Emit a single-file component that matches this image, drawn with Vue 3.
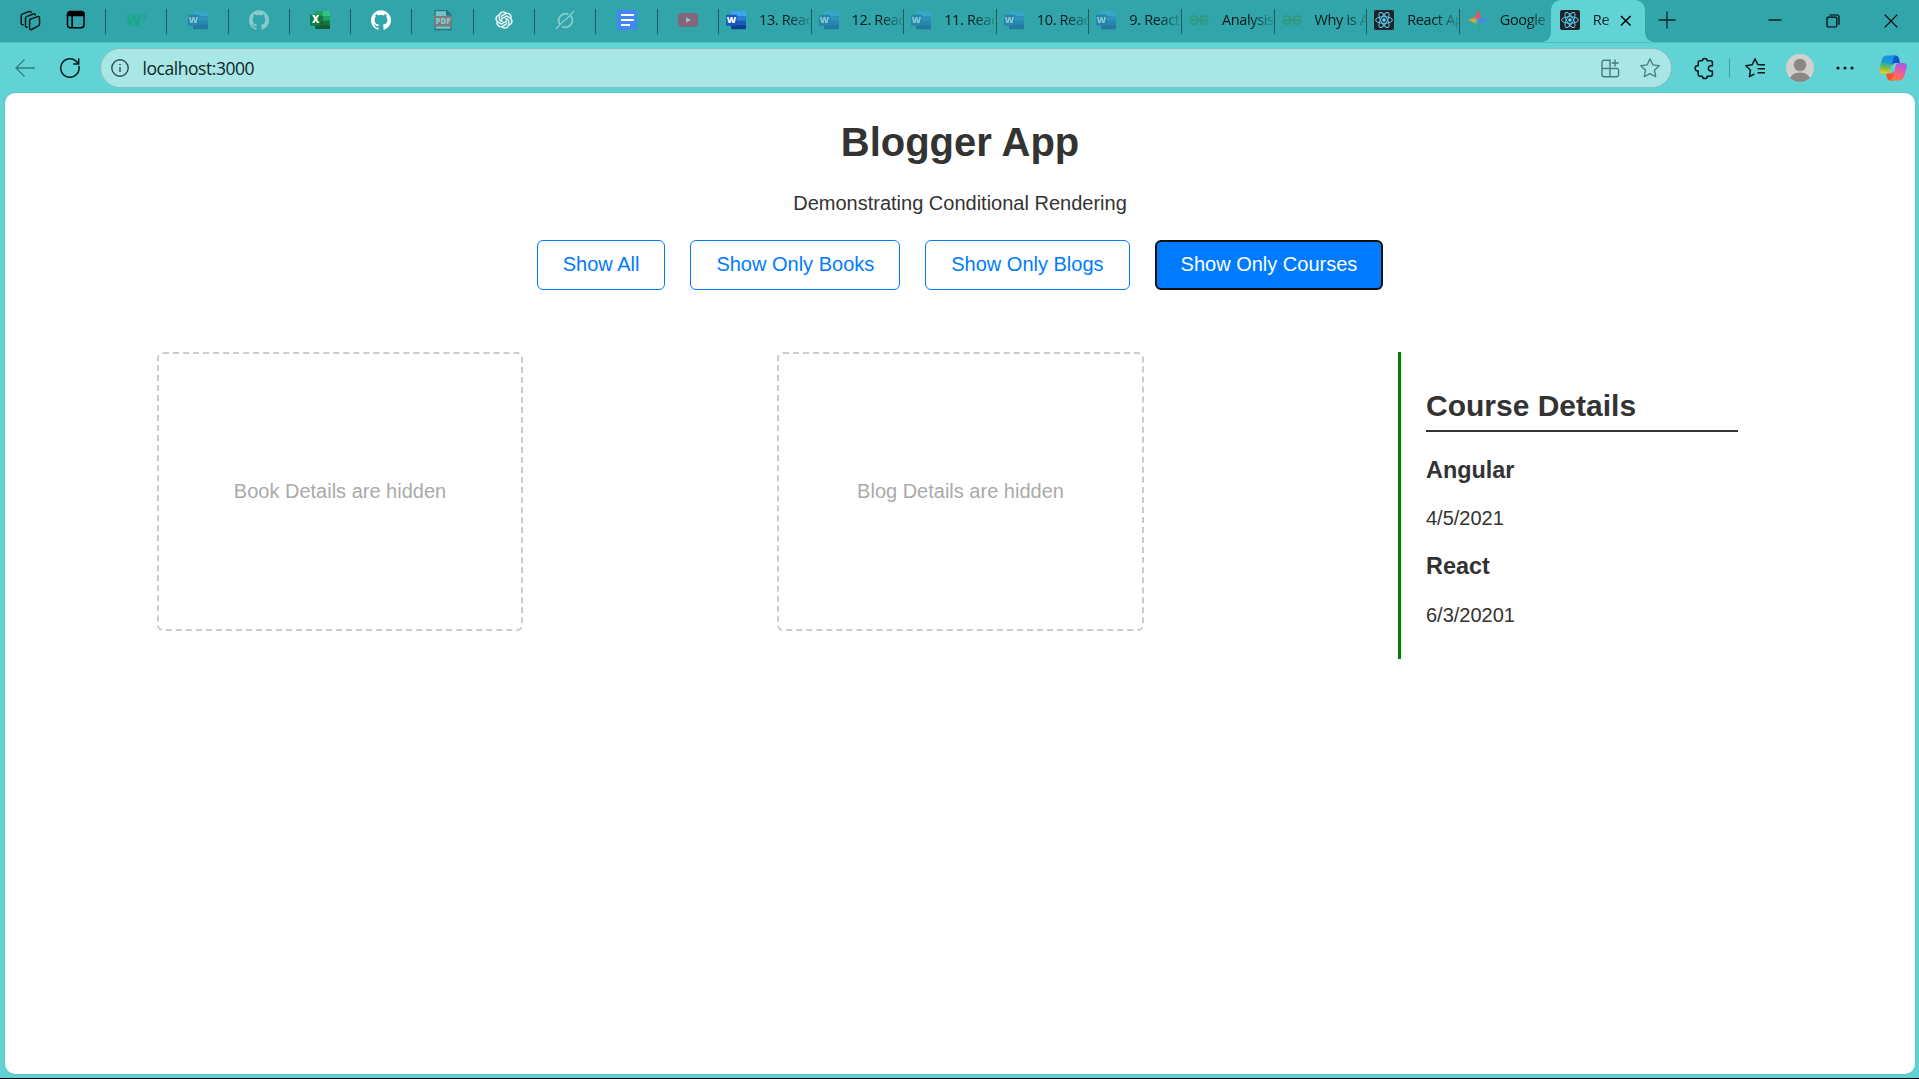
<script setup>
import { ref } from 'vue'

const pinned = [
  { icon: 'w3', dim: true },
  { icon: 'word', dim: true },
  { icon: 'github', dim: true },
  { icon: 'excel', dim: false },
  { icon: 'github', dim: false },
  { icon: 'pdf', dim: true },
  { icon: 'openai', dim: false },
  { icon: 'grok', dim: true },
  { icon: 'docs', dim: false },
  { icon: 'youtube', dim: true },
]

const tabs = [
  { icon: 'word', label: '13. React' },
  { icon: 'word', label: '12. React', dim: true },
  { icon: 'word', label: '11. React', dim: true },
  { icon: 'word', label: '10. React', dim: true },
  { icon: 'word', label: '9. React', dim: true },
  { icon: 'gfg', label: 'Analysis', dim: true },
  { icon: 'gfg', label: 'Why is A', dim: true },
  { icon: 'react', label: 'React Ap' },
  { icon: 'gemini', label: 'Google' },
]

const allTabs = [
  ...pinned.map((t) => ({ ...t, pinned: true })),
  ...tabs,
  { icon: 'react', label: 'Re', active: true },
]

const views = [
  { id: 'all', label: 'Show All' },
  { id: 'books', label: 'Show Only Books' },
  { id: 'blogs', label: 'Show Only Blogs' },
  { id: 'courses', label: 'Show Only Courses' },
]
const current = ref('courses')

const courses = [
  { name: 'Angular', date: '4/5/2021' },
  { name: 'React', date: '6/3/20201' },
]
</script>

<template>
  <div class="window">
    <header class="tabstrip">
      <div class="workspace">
        <svg class="ws-icon" viewBox="0 0 22 22" fill="none" stroke="#0a1a1b" stroke-width="1.5" stroke-linejoin="round" stroke-linecap="round">
          <path d="M11.2 9.2 18.6 6.6c1-.4 1.9.2 1.9 1.2v6.3c0 .8-.4 1.4-1.100 1.7l-6.800 3.700c-1 .4-2-.1-2-1.200v-7.500c0-.8.2-1.300.6-1.600z" />
          <path d="M8.200 17.200c-1 .2-1.700-.5-1.700-1.500V8.300c0-.8.300-1.400 1-1.700l6.900-2.600c1-.3 1.700 0 1.900.9" />
          <path d="M4.200 14.800c-1 .2-2-.5-2-1.500V5.800c0-.8.300-1.400 1-1.700l6.900-2.600c1-.3 1.700 0 1.900.9" />
        </svg>
        <svg class="tab-actions" viewBox="0 0 20 20" fill="none" stroke="#000" stroke-width="1.500">
          <rect x="1.500" y="1.800" width="16.500" height="16" rx="3" />
          <path d="M1.500 5.500V4.500a3 3 0 0 1 3-3H15a3 3 0 0 1 3 3v1z" fill="#000" />
          <path d="M6.100 5v12.500" />
        </svg>
      </div>

      <div
        v-for="(tab, i) in allTabs"
        :key="i"
        class="tab"
        :class="{ pinned: tab.pinned, active: tab.active }"
      >
        <span class="favicon" :class="[tab.icon, { dim: tab.dim }]">
          <svg v-if="tab.icon === 'w3'" viewBox="0 0 20 20">
            <text x="0" y="15.800" class="glyph" font-size="21" textLength="15.500" lengthAdjust="spacingAndGlyphs" fill="#04aa6d">w</text>
            <text x="15" y="8.800" class="glyph" font-size="9" fill="#04aa6d">3</text>
          </svg>

          <svg v-else-if="tab.icon === 'word'" viewBox="0 0 20 20">
            <path d="M6 1h13a1 1 0 0 1 1 1v4H5V2a1 1 0 0 1 1-1z" fill="#41a5ee" />
            <path d="M5 6h15v4.500H5z" fill="#2b7cd3" />
            <path d="M5 10.500h15V15H5z" fill="#185abd" />
            <path d="M5 15h15v3.500a.7.700 0 0 1-.7.700H6a1 1 0 0 1-1-1z" fill="#103f91" />
            <rect x="0" y="4.700" width="11" height="11" rx="1" fill="#185abd" />
            <text x="5.500" y="13.400" class="glyph" font-size="9" text-anchor="middle" fill="#fff">W</text>
          </svg>

          <svg v-else-if="tab.icon === 'excel'" viewBox="0 0 20 20">
            <path d="M6 1h7v5H5V2a1 1 0 0 1 1-1z" fill="#21a366" />
            <path d="M13 1h6a1 1 0 0 1 1 1v4h-7z" fill="#33c481" />
            <path d="M5 6h8v4.500H5z" fill="#107c41" />
            <path d="M13 6h7v4.500h-7z" fill="#21a366" />
            <path d="M5 10.500h8V19H6a1 1 0 0 1-1-1z" fill="#185c37" />
            <path d="M13 10.500h7V15h-7z" fill="#107c41" />
            <path d="M13 15h7v3.500a.6.600 0 0 1-.6.600H13z" fill="#185c37" />
            <rect x="0" y="4.700" width="11" height="11" rx="1" fill="#107c41" />
            <text x="5.500" y="13.400" class="glyph" font-size="10" text-anchor="middle" fill="#fff">X</text>
          </svg>

          <svg v-else-if="tab.icon === 'github'" viewBox="0 0 24 24" fill="#fff">
            <path d="M12 .297c-6.630 0-12 5.373-12 12 0 5.303 3.438 9.800 8.205 11.385.6.113.82-.258.82-.577 0-.285-.01-1.040-.015-2.040-3.338.724-4.042-1.610-4.042-1.610C4.422 18.070 3.633 17.700 3.633 17.700c-1.087-.744.084-.729.084-.729 1.205.084 1.838 1.236 1.838 1.236 1.070 1.835 2.809 1.305 3.495.998.108-.776.417-1.305.76-1.605-2.665-.3-5.466-1.332-5.466-5.930 0-1.310.465-2.380 1.235-3.220-.135-.303-.54-1.523.105-3.176 0 0 1.005-.322 3.300 1.230.96-.267 1.980-.399 3-.405 1.020.006 2.040.138 3 .405 2.280-1.552 3.285-1.230 3.285-1.230.645 1.653.24 2.873.12 3.176.765.840 1.230 1.910 1.230 3.220 0 4.610-2.805 5.625-5.475 5.920.42.360.81 1.096.81 2.220 0 1.606-.015 2.896-.015 3.286 0 .315.210.690.825.570C20.565 22.092 24 17.592 24 12.297c0-6.627-5.373-12-12-12" />
          </svg>

          <svg v-else-if="tab.icon === 'pdf'" viewBox="0 0 20 20">
            <path d="M2 .7h12l4 4v14.800H2z" fill="#d5eeee" stroke="#123c3e" stroke-width="1.300" />
            <path d="M13.500.7v4.500H18" fill="#123c3e" stroke="#123c3e" />
            <rect x="1" y="6" width="18" height="10.500" fill="#e0443e" />
            <text x="10" y="14.200" class="glyph" font-size="8" text-anchor="middle" textLength="15" lengthAdjust="spacingAndGlyphs" fill="#fff">PDF</text>
          </svg>

          <svg v-else-if="tab.icon === 'openai'" viewBox="-2 -2 28 28" fill="#fff" stroke="#fff" stroke-width=".4">
            <path d="M22.282 9.821a5.985 5.985 0 0 0-.516-4.910 6.046 6.046 0 0 0-6.510-2.900A6.065 6.065 0 0 0 4.981 4.182a5.985 5.985 0 0 0-3.998 2.900 6.046 6.046 0 0 0 .743 7.097 5.980 5.980 0 0 0 .511 4.911 6.051 6.051 0 0 0 6.515 2.900A5.985 5.985 0 0 0 13.260 24a6.056 6.056 0 0 0 5.772-4.206 5.990 5.990 0 0 0 3.998-2.900 6.056 6.056 0 0 0-.748-7.073zM13.260 22.430a4.476 4.476 0 0 1-2.876-1.041l.141-.080 4.779-2.758a.795.795 0 0 0 .393-.681v-6.737l2.020 1.169a.071.071 0 0 1 .038.052v5.583a4.504 4.504 0 0 1-4.495 4.493zM3.600 18.304a4.470 4.470 0 0 1-.535-3.014l.142.085 4.783 2.759a.771.771 0 0 0 .781 0l5.843-3.369v2.332a.080.080 0 0 1-.033.062L9.740 19.950a4.500 4.500 0 0 1-6.140-1.646zM2.341 7.896a4.485 4.485 0 0 1 2.366-1.973V11.600a.766.766 0 0 0 .388.677l5.815 3.354-2.020 1.169a.076.076 0 0 1-.071 0l-4.830-2.787A4.504 4.504 0 0 1 2.341 7.872zm16.597 3.855l-5.833-3.387L15.119 7.200a.076.076 0 0 1 .071 0l4.830 2.791a4.494 4.494 0 0 1-.676 8.105v-5.678a.790.790 0 0 0-.406-.667zm2.010-3.023l-.141-.085-4.774-2.782a.776.776 0 0 0-.785 0L9.409 9.230V6.897a.066.066 0 0 1 .028-.061l4.830-2.787a4.500 4.500 0 0 1 6.680 4.660zm-12.640 4.135l-2.020-1.164a.080.080 0 0 1-.038-.057V6.075a4.500 4.500 0 0 1 7.375-3.453l-.142.080L8.704 5.460a.795.795 0 0 0-.393.681zm1.097-2.365l2.602-1.500 2.607 1.500v2.999l-2.597 1.500-2.607-1.500z" />
          </svg>

          <svg v-else-if="tab.icon === 'grok'" viewBox="0 0 20 20" fill="none" stroke="#fff" stroke-width="1.900">
            <path d="M15.200 5.200a7 7 0 0 1-8.200 11.200M4.800 14.400A7 7 0 0 1 13.500 4.300" />
            <path d="M.8 19.200 6.500 13 13 7.500 19 1" stroke-width="1.300" />
          </svg>

          <svg v-else-if="tab.icon === 'docs'" viewBox="0 0 20 20">
            <rect width="20" height="20" rx="2.500" fill="#4285f4" />
            <path d="M4 5h13M4 10h13M4 15h9" stroke="#fff" stroke-width="2.100" />
          </svg>

          <svg v-else-if="tab.icon === 'youtube'" viewBox="0 0 20 20">
            <rect y="3" width="20" height="14" rx="3.500" fill="#f8103c" />
            <path d="M8 7.200v5.600l5-2.800z" fill="#fff" />
          </svg>

          <svg v-else-if="tab.icon === 'gfg'" viewBox="0 0 20 20">
            <path d="M1.800 7.600C3 5.500 8.800 5 8.800 10.200c0 5-7.500 5.200-7.600 0h17.600c-.1 5.200-7.600 5-7.600 0 0-5.200 5.800-4.700 7-2.600" fill="none" stroke="#2f8d46" stroke-width="1.900" />
          </svg>

          <svg v-else-if="tab.icon === 'react'" viewBox="0 0 20 20">
            <rect width="20" height="20" rx="2" fill="#20232a" />
            <g fill="none" stroke="#61dafb" stroke-width=".9">
              <ellipse cx="10" cy="10" rx="8.400" ry="3.300" />
              <ellipse cx="10" cy="10" rx="8.400" ry="3.300" transform="rotate(60 10 10)" />
              <ellipse cx="10" cy="10" rx="8.400" ry="3.300" transform="rotate(120 10 10)" />
            </g>
            <circle cx="10" cy="10" r="1.800" fill="#61dafb" />
          </svg>

          <svg v-else-if="tab.icon === 'gemini'" viewBox="0 0 20 20">
            <defs>
              <linearGradient id="gem" gradientUnits="userSpaceOnUse" x1="1" y1="10" x2="19" y2="10">
                <stop offset="0" stop-color="#fbbc05" />
                <stop offset=".28" stop-color="#e8c02c" />
                <stop offset=".5" stop-color="#4a8df0" />
                <stop offset="1" stop-color="#3186ff" />
              </linearGradient>
              <linearGradient id="gemTop" gradientUnits="userSpaceOnUse" x1="10" y1="1" x2="11" y2="10">
                <stop offset="0" stop-color="#f94543" />
                <stop offset=".5" stop-color="#f2524c" />
                <stop offset="1" stop-color="#f94543" stop-opacity="0" />
              </linearGradient>
              <linearGradient id="gemBottom" gradientUnits="userSpaceOnUse" x1="8" y1="20" x2="9.500" y2="11">
                <stop offset="0" stop-color="#08b962" />
                <stop offset=".4" stop-color="#20b46e" />
                <stop offset="1" stop-color="#08b962" stop-opacity="0" />
              </linearGradient>
            </defs>
            <g stroke-linejoin="round">
              <path
                v-for="g in ['gem', 'gemTop', 'gemBottom']"
                :key="g"
                d="M10 .8c1 5 4 8.200 9.200 9.200-5.200 1-8.200 4.200-9.200 9.200C9 14.200 6 11 .8 10 6 9 9 5.800 10 .8z"
                :fill="`url(#${g})`"
                :stroke="`url(#${g})`"
                stroke-width=".8"
              />
            </g>
          </svg>
        </span>
        <span v-if="!tab.pinned" class="label">{{ tab.label }}</span>
        <svg v-if="tab.active" class="close" viewBox="0 0 12 12" stroke="#000" stroke-width="1.500">
          <path d="M1 1l10 10M11 1L1 11" />
        </svg>
      </div>

      <svg class="new-tab" viewBox="0 0 18 18" stroke="#0b2526" stroke-width="1.300">
        <path d="M9 .5v17M.5 9h17" />
      </svg>

      <div class="caption">
        <svg viewBox="0 0 14 14" stroke="#000" stroke-width="1.200"><path d="M.5 6h13" /></svg>
        <svg viewBox="0 0 14 14" fill="none" stroke="#000" stroke-width="1.200">
          <rect x="1" y="3.200" width="9.800" height="9.800" rx="1.200" />
          <path d="M3.500 1H11a2 2 0 0 1 2 2v7.800" />
        </svg>
        <svg viewBox="0 0 14 14" stroke="#000" stroke-width="1.200"><path d="M.7.7l12.600 12.600M13.300.7L.7 13.300" /></svg>
      </div>
    </header>

    <div class="toolbar">
      <svg class="back" viewBox="0 0 20 20" fill="none" stroke="#2f7f82" stroke-width="1.300">
        <path d="M20 10H1M9.500 1.500L1 10l8.500 8.500" />
      </svg>
      <svg class="reload" viewBox="0 0 20 20" fill="none" stroke="#061a1b" stroke-width="1.500">
        <path d="M18.900 7.900A9.200 9.200 0 1 1 16 3.100l2.500 2.700M18.700.5v5.600h-5.600" />
      </svg>

      <div class="address">
        <svg class="info" viewBox="0 0 18 18" fill="none" stroke="#2d4f50" stroke-width="1.400">
          <circle cx="9" cy="9" r="8.200" />
          <path d="M9 8v5" />
          <circle cx="9" cy="5.600" r=".5" fill="#2d4f50" stroke-width=".7" />
        </svg>
        <span class="url">localhost:3000</span>
        <svg class="install" viewBox="0 0 19 19" fill="none" stroke="#4c7b7c" stroke-width="1.400">
          <path d="M9 9.500V1.200H3.200A2.200 2.200 0 0 0 1 3.400v12.200A2.200 2.200 0 0 0 3.200 17.800h12.200a2.200 2.200 0 0 0 2.200-2.200v-4a2 2 0 0 0-2-2.100H1M9 9.500v8.300M14 .5v7M10.600 4H17.800" />
        </svg>
        <svg class="star" viewBox="0 0 20 20" fill="none" stroke="#4c7b7c" stroke-width="1.300" stroke-linejoin="round">
          <path d="M10 .9l2.800 5.900 6.400.9-4.700 4.500 1.200 6.500-5.700-3.100-5.700 3.100 1.200-6.500L.8 7.700l6.400-.9z" />
        </svg>
      </div>

      <svg class="puzzle" viewBox="0 0 20 20" fill="none" stroke="#061a1b" stroke-width="1.500" stroke-linejoin="round">
        <path d="M8 2.700a2.300 2.300 0 0 1 4.600 0H16a1.500 1.500 0 0 1 1.500 1.500V7.300H16.200a2.500 2.500 0 0 0 0 5H17.500v3.500a1.500 1.500 0 0 1-1.500 1.500H12.600a2.300 2.300 0 0 1-4.600 0H5.500A1.500 1.500 0 0 1 4 15.800V12.300H3.500a2.500 2.500 0 0 1 0-5H4V4.200A1.500 1.500 0 0 1 5.500 2.700z" />
      </svg>
      <i class="rule"></i>
      <svg class="favs" viewBox="0 0 20 20" fill="none" stroke="#061a1b" stroke-width="1.500" stroke-linejoin="round">
        <path d="M18.800 7.100l-6-.7L10 .9 7.200 6.800l-6.300.9 4.600 4.500L4.400 18.700l5-2.700M12.500 10.700H20M12.500 14.700H20M15 6.800H20" />
      </svg>
      <svg class="avatar" viewBox="0 0 28 28">
        <defs><clipPath id="av"><circle cx="14" cy="14" r="14" /></clipPath></defs>
        <g clip-path="url(#av)">
          <rect width="28" height="28" fill="#d2d0ce" />
          <circle cx="14" cy="11" r="6.200" fill="#8a8886" />
          <ellipse cx="14" cy="26.500" rx="10.500" ry="8" fill="#8a8886" />
        </g>
      </svg>
      <svg class="more" viewBox="0 0 18 4" fill="#061a1b">
        <circle cx="2" cy="2" r="1.600" /><circle cx="9" cy="2" r="1.600" /><circle cx="16" cy="2" r="1.600" />
      </svg>
      <svg class="copilot" viewBox="0 0 28 26">
        <defs>
          <linearGradient id="cl" x1=".4" y1="0" x2=".3" y2="1">
            <stop offset="0" stop-color="#1592e6" />
            <stop offset=".35" stop-color="#1d9bd0" />
            <stop offset=".65" stop-color="#6dbb56" />
            <stop offset="1" stop-color="#f6cf0c" />
          </linearGradient>
          <linearGradient id="cr" x1=".7" y1="0" x2=".3" y2="1">
            <stop offset="0" stop-color="#a657ee" />
            <stop offset=".5" stop-color="#ee5a9b" />
            <stop offset="1" stop-color="#fd7a3e" />
          </linearGradient>
          <linearGradient id="cb" x1="0" y1="0" x2="1" y2="1">
            <stop offset="0" stop-color="#1560d8" />
            <stop offset="1" stop-color="#0b48c4" />
          </linearGradient>
        </defs>
        <path d="M13 .5h3.500c2 0 2.900.9 3.500 3l1 4.500h-4.500c-2 0-3 1-3.500 3z" fill="url(#cb)" />
        <path d="M15 25.500h-3.500c-2 0-2.900-.9-3.500-3l-1-4h4.500c2 0 3-1 3.500-3z" fill="#f2552c" />
        <path d="M8 .5h9c-1.500.3-2.200 1.500-2.700 3.500l-3 11c-.6 2.400-1.700 3.500-4 3.500H4c-3 0-4.300-2-3.600-5L3 4.500C3.800 1.800 5.300.5 8 .5z" fill="url(#cl)" />
        <path d="M20 25.500h-9c1.500-.3 2.200-1.500 2.700-3.500l3-11c.6-2.200 1.700-3 4-3H24c3 0 4.300 1.700 3.600 4.700L25 21.500c-.8 2.700-2.300 4-5 4z" fill="url(#cr)" />
      </svg>
    </div>

    <main class="page">
      <h1>Blogger App</h1>
      <p class="tagline">Demonstrating Conditional Rendering</p>
      <nav class="filters">
        <button
          v-for="v in views"
          :key="v.id"
          :class="{ selected: current === v.id }"
          @click="current = v.id"
        >{{ v.label }}</button>
      </nav>

      <div class="columns">
        <section class="col"><div class="hidden-box">Book Details are hidden</div></section>
        <section class="col"><div class="hidden-box wide">Blog Details are hidden</div></section>
        <section class="col">
          <div class="courses">
            <h2>Course Details</h2>
            <template v-for="c in courses" :key="c.name">
              <h3>{{ c.name }}</h3>
              <p>{{ c.date }}</p>
            </template>
          </div>
        </section>
      </div>
    </main>
    <div class="edge"></div>
  </div>
</template>

<style>
body {
  background: #62d3d4;
  overflow: hidden;
}
</style>

<style scoped>
.window {
  width: 1919px;
  height: 1079px;
  display: flex;
  flex-direction: column;
  background: #62d3d4;
  overflow: hidden;
}
svg {
  display: block;
  flex: none;
  overflow: visible;
}
.glyph {
  font-family: 'Open Sans', 'Noto Sans', sans-serif;
  font-weight: 800;
}

/* Tab strip */
.tabstrip {
  display: flex;
  height: 42px;
  flex: none;
  background: #31a5a9;
  font-family: 'Open Sans', 'Noto Sans', sans-serif;
}
.workspace {
  display: flex;
  width: 105px;
  flex: none;
}
.ws-icon {
  width: 22px;
  height: 22px;
  margin: 9.500px 0 0 18.500px;
}
.tab-actions {
  width: 20px;
  height: 20px;
  margin: 10px 0 0 25px;
}
.tab {
  display: flex;
  flex: none;
  width: 92.600px;
  height: 42px;
  position: relative;
}
.tab.pinned {
  width: 61.300px;
}
.tab:not(.active)::before {
  content: '';
  width: 1px;
  height: 25px;
  margin-top: 9px;
  background: #1b5d60;
  flex: none;
}
.favicon {
  width: 20px;
  height: 20px;
  margin: 10px 0 0 7px;
  flex: none;
}
.favicon svg {
  width: 20px;
  height: 20px;
}
.tab.pinned .favicon {
  margin-left: 20.300px;
}
.tab .favicon.gemini {
  margin-left: 8px;
  margin-right: -1px;
}
.dim {
  opacity: 0.42;
}
.label {
  margin: 8px 0 0 13px;
  width: 51px;
  overflow: hidden;
  white-space: nowrap;
  font-size: 14.500px;
  letter-spacing: -0.350px;
  line-height: 24px;
  color: #061a1b;
  mask-image: linear-gradient(90deg, #000 55%, rgba(0, 0, 0, 0.150));
}
.tab.active {
  width: 94px;
  background: #62d3d4;
  border-radius: 10px 10px 0 0;
}
.tab.active::before,
.tab.active::after {
  content: '';
  position: absolute;
  bottom: 0;
  width: 9px;
  height: 9px;
}
.tab.active::before {
  left: -9px;
  background: radial-gradient(circle at 0 0, transparent 8.500px, #62d3d4 9px);
}
.tab.active::after {
  right: -9px;
  background: radial-gradient(circle at 100% 0, transparent 8.500px, #62d3d4 9px);
}
.active .favicon {
  margin-left: 9px;
}
.active .label {
  width: 18px;
  margin-left: 12.500px;
  mask-image: linear-gradient(90deg, #000 55%, rgba(0, 0, 0, 0.600));
}
.close {
  width: 11.500px;
  height: 11.500px;
  margin: 15px 0 0 9px;
}
.new-tab {
  width: 18px;
  height: 18px;
  margin: 10.500px 0 0 13px;
}
.caption {
  display: flex;
  gap: 44px;
  margin: 14.200px 21px 0 auto;
}
.caption svg {
  width: 14px;
  height: 14px;
}

/* Toolbar */
.toolbar {
  display: flex;
  align-items: center;
  height: 51px;
  flex: none;
  box-sizing: border-box;
  border-top: 1px solid #4cbcbf;
}
.back {
  width: 20px;
  height: 20px;
  margin-left: 15px;
}
.reload {
  width: 20px;
  height: 20px;
  margin-left: 25px;
}
.address {
  display: flex;
  align-items: center;
  box-sizing: border-box;
  width: 1572px;
  height: 40px;
  margin-left: 20px;
  border: 1px solid #87bcbb;
  border-radius: 20px;
  background: #a8e7e5;
}
.info {
  width: 18px;
  height: 18px;
  margin-left: 10px;
}
.url {
  margin-left: 13.500px;
  flex: 1;
  font-family: 'Open Sans', 'Noto Sans', sans-serif;
  font-size: 17.500px;
  letter-spacing: -0.450px;
  line-height: 24px;
  color: #12282a;
}
.install {
  width: 19px;
  height: 19px;
  margin-right: 20px;
}
.star {
  width: 20px;
  height: 20px;
  margin-right: 11px;
}
.puzzle {
  width: 21px;
  height: 21px;
  margin-left: 22px;
}
.rule {
  width: 1px;
  height: 20px;
  margin-left: 13.500px;
  background: #459fa1;
}
.favs {
  width: 20px;
  height: 20px;
  margin-left: 15.500px;
}
.avatar {
  width: 28px;
  height: 28px;
  margin-left: 21px;
}
.more {
  width: 18px;
  height: 4px;
  margin-left: 22px;
}
.copilot {
  width: 28px;
  height: 26px;
  margin-left: 25px;
}

/* Page */
.page {
  flex: 1;
  margin: 0 4px 4px 5px;
  box-sizing: border-box;
  border-radius: 10px;
  background: #fff;
  box-shadow: 0 0 2px rgba(20, 90, 90, 0.350);
  padding-top: 26px;
  font-family: 'Liberation Sans', Arial, sans-serif;
  font-size: 20px;
  line-height: 23px;
  color: #333;
}
.edge {
  height: 1px;
  flex: none;
  background: #000;
}
h1,
h2,
h3,
p {
  margin: 0;
}
h1 {
  font-size: 40px;
  line-height: 46px;
  text-align: center;
}
.tagline {
  margin: 27px 0 25px;
  text-align: center;
}
.filters {
  display: flex;
  justify-content: center;
  gap: 25px;
}
button {
  height: 50px;
  padding: 0 25px 2px;
  border: 1px solid #007bff;
  border-radius: 6px;
  background: #fff;
  color: #007bff;
  font: 20px 'Liberation Sans', Arial, sans-serif;
}
button.selected {
  padding: 0 24px 2px;
  border: 2px solid #101010;
  background: #007bff;
  color: #fff;
}
.columns {
  display: flex;
  justify-content: space-between;
  margin: 62px 150px 0 152px;
}
.col {
  width: 367px;
}
.col:nth-child(2) {
  margin-right: 1px;
}
.hidden-box {
  box-sizing: border-box;
  width: 366px;
  height: 279px;
  display: flex;
  align-items: center;
  justify-content: center;
  border: 2px dashed #ccc;
  border-radius: 6px;
  color: #aaa;
}
.hidden-box.wide {
  width: 367px;
}
.courses {
  box-sizing: border-box;
  width: 340px;
  height: 307px;
  padding: 37px 0 0 25px;
  border-left: 3px solid #008000;
}
h2 {
  font-size: 30px;
  line-height: 34px;
  padding-bottom: 7px;
  border-bottom: 2px solid #333;
  margin-bottom: 24.500px;
}
h3 {
  font-size: 23.400px;
  line-height: 27px;
  margin-bottom: 23.200px;
}
.courses p {
  margin-bottom: 23.700px;
}
</style>
